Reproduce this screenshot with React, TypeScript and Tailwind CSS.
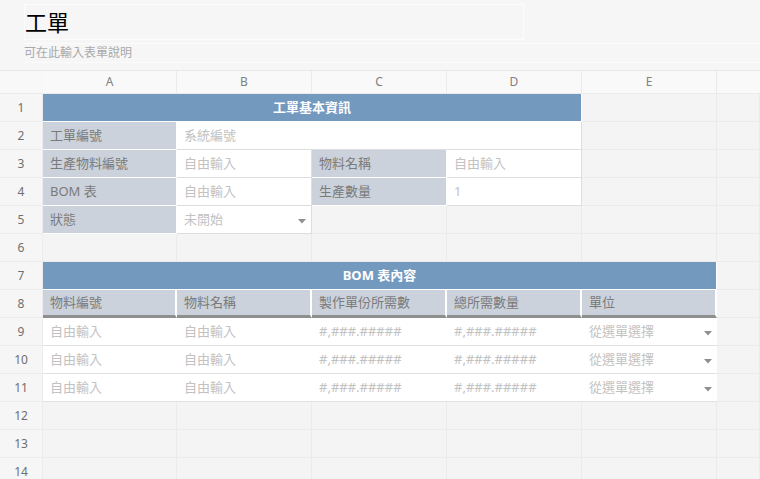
import React from 'react'

type Kind = 'empty' | 'blue' | 'label' | 'input' | 'head' | 'row'

type Cell = {
  kind: Kind
  text?: string
  span?: number
  caret?: boolean
}

const FONT = '"Noto Sans", "Noto Sans CJK TC", sans-serif'

const e = (): Cell => ({ kind: 'empty' })

const rows: Cell[][] = [
  [{ kind: 'blue', text: '工單基本資訊', span: 4 }, e(), e()],
  [{ kind: 'label', text: '工單編號' }, { kind: 'input', text: '系統編號', span: 3 }, e(), e()],
  [
    { kind: 'label', text: '生產物料編號' },
    { kind: 'input', text: '自由輸入' },
    { kind: 'label', text: '物料名稱' },
    { kind: 'input', text: '自由輸入' },
    e(),
    e(),
  ],
  [
    { kind: 'label', text: 'BOM 表' },
    { kind: 'input', text: '自由輸入' },
    { kind: 'label', text: '生產數量' },
    { kind: 'input', text: '1' },
    e(),
    e(),
  ],
  [{ kind: 'label', text: '狀態' }, { kind: 'input', text: '未開始', caret: true }, e(), e(), e(), e()],
  [e(), e(), e(), e(), e(), e()],
  [{ kind: 'blue', text: 'BOM 表內容', span: 5 }, e()],
  [
    { kind: 'head', text: '物料編號' },
    { kind: 'head', text: '物料名稱' },
    { kind: 'head', text: '製作單份所需數' },
    { kind: 'head', text: '總所需數量' },
    { kind: 'head', text: '單位' },
    e(),
  ],
  ...[0, 1, 2].map(() => [
    { kind: 'row', text: '自由輸入' } as Cell,
    { kind: 'row', text: '自由輸入' } as Cell,
    { kind: 'row', text: '#,###.#####' } as Cell,
    { kind: 'row', text: '#,###.#####' } as Cell,
    { kind: 'row', text: '從選單選擇', caret: true } as Cell,
    e(),
  ]),
  [e(), e(), e(), e(), e(), e()],
  [e(), e(), e(), e(), e(), e()],
  [e(), e(), e(), e(), e(), e()],
]

const kindClass: Record<Kind, string> = {
  empty: 'bg-[#f4f4f4] border-r border-b border-[#ebebeb]',
  blue: 'bg-[#7499bf] border-r border-b border-white justify-center text-white font-bold',
  label: 'bg-[#cbd2db] border-r border-b border-white text-[#7a7a7a] px-[7px]',
  input: 'bg-white border-r border-b border-[#dedede] text-[#c2c2c2] px-[7px]',
  head: 'bg-[#cbd2db] border-r-2 border-r-white border-b-[3px] border-b-[#8e8e8e] text-[#7a7a7a] px-[7px]',
  row: 'bg-white border-b border-[#e2e2e2] text-[#c2c2c2] px-[7px]',
}

const spanClass: Record<number, string> = {
  1: '',
  3: 'col-span-3',
  4: 'col-span-4',
  5: 'col-span-5',
}

function Caret() {
  return (
    <svg width="8" height="5" viewBox="0 0 8 5" className="absolute right-[5px] top-1/2 -translate-y-[1px]">
      <path d="M0 0 L8 0 L4 4.5 Z" fill="#8f8f8f" />
    </svg>
  )
}

function GridCell({ cell }: { cell: Cell }) {
  return (
    <div
      className={`relative flex items-center text-[13px] h-[28px] overflow-hidden whitespace-nowrap ${kindClass[cell.kind]} ${spanClass[cell.span ?? 1]}`}
    >
      {cell.text}
      {cell.caret && <Caret />}
    </div>
  )
}

export default function App() {
  const cols = ['A', 'B', 'C', 'D', 'E']
  return (
    <div className="w-[760px] h-[479px] overflow-hidden bg-[#f6f6f6]" style={{ fontFamily: FONT }}>
      {/* Form title + description */}
      <div className="pt-[4px] pl-[24px]">
        <div className="w-[500px] h-[36px] border border-[#fcfcfc] flex items-center text-[22px] text-black leading-none">
          工單
        </div>
        <div className="mt-[3px] h-[20px] border-y border-[#fbfbfb] flex items-center text-[12px] text-[#a9a9a9]">
          可在此輸入表單說明
        </div>
      </div>

      {/* Spreadsheet */}
      <div className="mt-[7px] grid grid-cols-[43px_134px_135px_135px_135px_135px_1fr] border-t border-[#e9e9e9]">
        <div className="h-[23px] bg-[#f8f8f8] border-b border-[#ebebeb]" />
        {cols.map((c) => (
          <div
            key={c}
            className="h-[23px] bg-[#f9f9f9] border-r border-b border-[#ebebeb] flex items-center justify-center text-[12px] text-[#808080]"
          >
            {c}
          </div>
        ))}
        <div className="h-[23px] bg-[#f9f9f9] border-b border-[#ebebeb]" />

        {rows.map((row, i) => (
          <React.Fragment key={i}>
            <div className="h-[28px] bg-[#f6f6f6] border-r border-b border-[#ececec] flex items-center justify-center text-[12px] text-[#6f6f6f]">
              {i + 1}
            </div>
            {row.map((cell, j) => (
              <GridCell key={j} cell={cell} />
            ))}
          </React.Fragment>
        ))}
      </div>
    </div>
  )
}
